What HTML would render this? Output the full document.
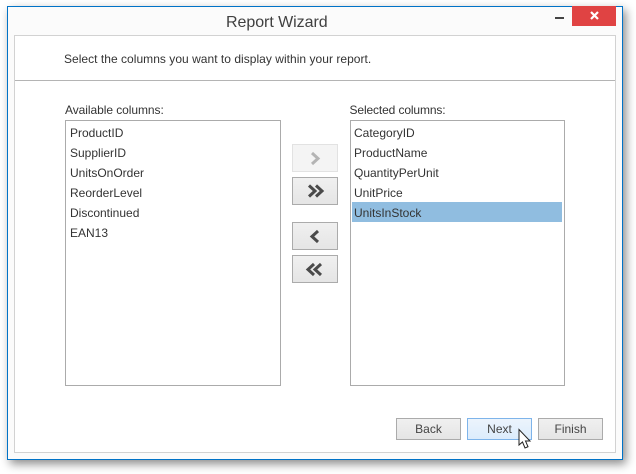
<!DOCTYPE html>
<html><head><meta charset="utf-8"><style>
html,body{margin:0;padding:0;background:#fff;width:636px;height:474px;overflow:hidden}
*{box-sizing:border-box}
body{font-family:"Liberation Sans",sans-serif;font-size:12px;color:#333;position:relative}
.a{position:absolute;white-space:nowrap}
.t{position:absolute;white-space:nowrap;line-height:20px;height:20px}
.box{position:absolute;border:1px solid #ababab;background:#fff}
.btn{position:absolute;border:1px solid #ababab;background:linear-gradient(#f0f0f0,#e5e5e5);text-align:center;line-height:20px;color:#444}
</style></head><body>
<div class="a" style="left:7px;top:6px;width:616px;height:454px;background:#fbfbfb;border:1px solid #0173c7;box-shadow:3px 4px 9px rgba(0,0,0,.45)"></div>
<div class="a" style="left:14px;top:35px;width:602px;height:418px;background:#fff;border:1px solid #d2d2d2"></div>
<div class="a" style="left:15px;top:80px;width:600px;height:1px;background:#b4b4b4"></div>
<div class="a" style="left:226px;top:13px;font-size:16px;line-height:20px;color:#404040;letter-spacing:-.05px">Report Wizard</div>
<div class="a" style="left:555px;top:17px;width:9px;height:2px;background:#444"></div>
<div class="a" style="left:572px;top:6px;width:44px;height:20px;background:#e04343"></div>
<svg class="a" style="left:590px;top:11px" width="9" height="9" viewBox="0 0 9 9"><path d="M1 1L8 8M8 1L1 8" stroke="#fff" stroke-width="2.2"/></svg>
<div class="t" style="left:64px;top:49px;letter-spacing:.03px">Select the columns you want to display within your report.</div>
<div class="t" style="left:65px;top:100px;letter-spacing:-.06px">Available columns:</div>
<div class="t" style="left:349.500px;top:100px;letter-spacing:-.12px">Selected columns:</div>
<div class="box" style="left:65px;top:120px;width:216px;height:266px"></div>
<div class="box" style="left:350px;top:120px;width:215px;height:266px"></div>
<div class="t" style="left:70px;top:123px">ProductID</div>
<div class="t" style="left:70px;top:143px">SupplierID</div>
<div class="t" style="left:70px;top:163px">UnitsOnOrder</div>
<div class="t" style="left:70px;top:183px">ReorderLevel</div>
<div class="t" style="left:70px;top:203px">Discontinued</div>
<div class="t" style="left:70px;top:223px">EAN13</div>
<div class="a" style="left:352px;top:202px;width:210px;height:20px;background:#90bde0"></div>
<div class="t" style="left:354px;top:123px">CategoryID</div>
<div class="t" style="left:354px;top:143px">ProductName</div>
<div class="t" style="left:354px;top:163px">QuantityPerUnit</div>
<div class="t" style="left:354px;top:183px">UnitPrice</div>
<div class="t" style="left:354px;top:203px">UnitsInStock</div>
<div class="btn" style="left:292px;top:144px;width:46px;height:28px;background:#f4f4f4;border-color:#e2e2e2"></div>
<div class="btn" style="left:292px;top:177px;width:46px;height:28px"></div>
<div class="btn" style="left:292px;top:222px;width:46px;height:28px"></div>
<div class="btn" style="left:292px;top:255px;width:46px;height:28px"></div>
<svg class="a" style="left:292px;top:144px" width="46" height="139" viewBox="0 0 46 139" fill="none" stroke-width="3">
<path d="M20 9L26 14.500L20 20" stroke="#b4b4b4"/>
<path d="M17 41.500L23 47L17 52.500M24 41.500L30 47L24 52.500" stroke="#4a4a4a"/>
<path d="M26 87L20 92.500L26 98" stroke="#4a4a4a"/>
<path d="M22 120L16 125.500L22 131M29 120L23 125.500L29 131" stroke="#4a4a4a"/>
</svg>
<div class="btn" style="left:396px;top:418px;width:65px;height:22px">Back</div>
<div class="btn" style="left:467px;top:418px;width:65px;height:22px;border-color:#7eb4ea;background:linear-gradient(#ecf4fc,#dcecfc)">Next</div>
<div class="btn" style="left:538px;top:418px;width:65px;height:22px">Finish</div>
<svg class="a" style="left:517px;top:428px" width="16" height="22" viewBox="0 0 16 22"><path d="M2 1.500V17L5.500 14L8 20L11 18.700L8.500 13H13Z" fill="#fff" stroke="#222" stroke-width="1"/></svg>
</body></html>
